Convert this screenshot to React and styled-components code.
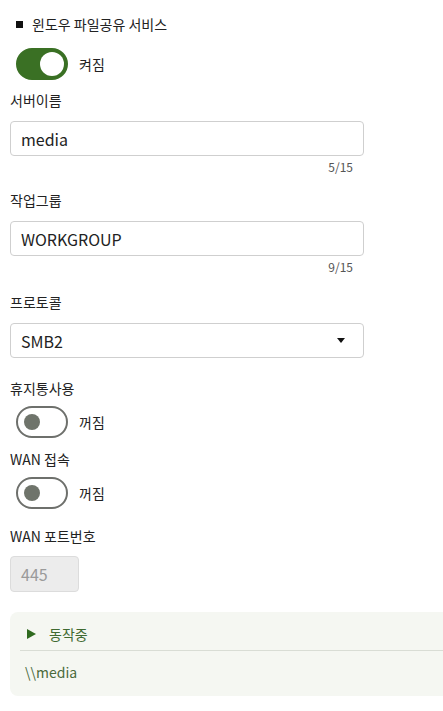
import React from 'react';
import styled, { createGlobalStyle } from 'styled-components';

const GlobalStyle = createGlobalStyle`
  body {
    margin: 0;
    background: #ffffff;
    overflow-x: hidden;
    font-family: "Noto Sans CJK KR", "Noto Sans", sans-serif;
    color: #222;
  }
`;

const Page = styled.div`
  padding: 14px 0 0 10px;
  display: flex;
  flex-direction: column;
`;

const Title = styled.div`
  display: flex;
  align-items: center;
  height: 20px;
  font-size: 14px;
  padding-left: 6px;
  gap: 9px;
  &::before {
    content: '';
    width: 7px;
    height: 7px;
    background: #111;
  }
`;

const ToggleRow = styled.label`
  display: flex;
  align-items: center;
  gap: 11px;
  padding-left: 6px;
  margin-top: ${p => p.$top}px;
  font-size: 14px;
  height: 32px;
`;

const Track = styled.span`
  position: relative;
  box-sizing: border-box;
  width: 52px;
  height: 32px;
  border-radius: 16px;
  background: ${p => (p.$on ? '#3a7024' : '#fff')};
  border: 2px solid ${p => (p.$on ? '#3a7024' : '#6e706c')};
`;

const Knob = styled.span`
  position: absolute;
  top: 50%;
  transform: translateY(-50%);
  border-radius: 50%;
  width: ${p => (p.$on ? 24 : 16)}px;
  height: ${p => (p.$on ? 24 : 16)}px;
  left: ${p => (p.$on ? 22 : 6)}px;
  background: ${p => (p.$on ? '#fff' : '#6f746b')};
`;

const Label = styled.div`
  font-size: 14px;
  line-height: 20px;
  height: 20px;
  margin-top: ${p => p.$top}px;
  margin-bottom: ${p => p.$bottom ?? 11}px;
`;

const Field = styled.div`
  box-sizing: border-box;
  width: ${p => p.$width || 354}px;
  height: ${p => p.$height || 35}px;
  border: 1px solid ${p => (p.$disabled ? '#dcdcdc' : '#cfcfcf')};
  border-radius: 4px;
  background: ${p => (p.$disabled ? '#ececec' : '#fff')};
  color: ${p => (p.$disabled ? '#9a9a9a' : '#222')};
  font-size: 16px;
  display: flex;
  align-items: center;
  justify-content: space-between;
  padding: 0 18px 0 10px;
`;

const Caret = styled.span`
  width: 0;
  height: 0;
  border-left: 4.5px solid transparent;
  border-right: 4.5px solid transparent;
  border-top: 5px solid #111;
`;

const Counter = styled.div`
  width: 354px;
  box-sizing: border-box;
  text-align: right;
  padding-right: 11px;
  margin-top: 3px;
  font-size: 12px;
  line-height: 16px;
  color: #555;
`;

const Panel = styled.div`
  margin-top: 20px;
  box-sizing: border-box;
  background: #f5f7f2;
  border-radius: 8px 0 0 8px;
  padding: 12px 0 14px 10px;
`;

const PanelHead = styled.div`
  display: flex;
  align-items: center;
  gap: 13px;
  height: 20px;
  padding: 0 0 6px 7px;
  border-bottom: 1px solid #d9ddd5;
  font-size: 14px;
  color: #3f6a31;
`;

const Play = styled.span`
  width: 0;
  height: 0;
  border-top: 5px solid transparent;
  border-bottom: 5px solid transparent;
  border-left: 9px solid #2f6a1f;
`;

const PanelBody = styled.div`
  padding: 11px 0 0 5px;
  font-size: 14px;
  line-height: 20px;
  color: #4a6a3b;
`;

const Toggle = ({ on, text, top }) => (
  <ToggleRow $top={top}>
    <Track $on={on}>
      <Knob $on={on} />
    </Track>
    {text}
  </ToggleRow>
);

export default function App() {
  return (
    <>
      <GlobalStyle />
      <Page>
        <Title>윈도우 파일공유 서비스</Title>
        <Toggle on text="켜짐" top={14} />

        <Label $top={10}>서버이름</Label>
        <Field>media</Field>
        <Counter>5/15</Counter>

        <Label $top={15}>작업그룹</Label>
        <Field>WORKGROUP</Field>
        <Counter>9/15</Counter>

        <Label $top={17}>프로토콜</Label>
        <Field>
          SMB2
          <Caret />
        </Field>

        <Label $top={20} $bottom={0}>휴지통사용</Label>
        <Toggle text="꺼짐" top={8} />

        <Label $top={11} $bottom={0}>WAN 접속</Label>
        <Toggle text="꺼짐" top={8} />

        <Label $top={17} $bottom={10}>WAN 포트번호</Label>
        <Field $disabled $width={69} $height={36}>445</Field>

        <Panel>
          <PanelHead>
            <Play />
            동작중
          </PanelHead>
          <PanelBody>\\media</PanelBody>
        </Panel>
      </Page>
    </>
  );
}
